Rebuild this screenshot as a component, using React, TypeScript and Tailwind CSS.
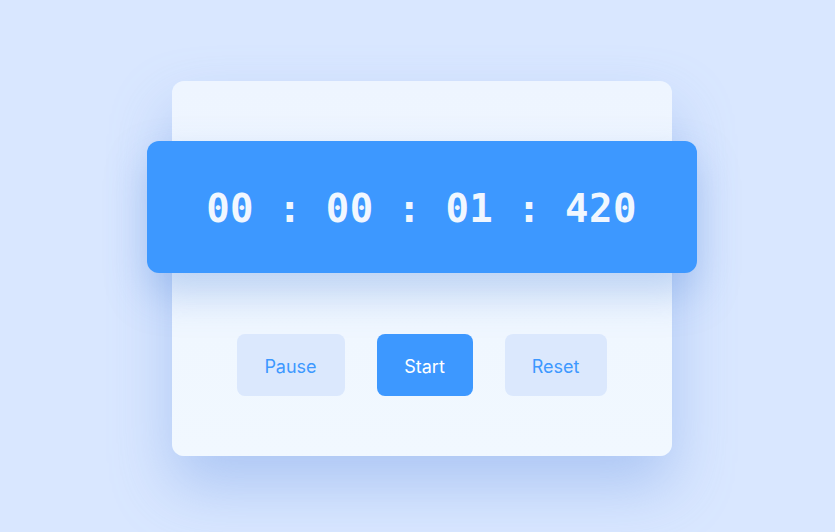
export default function App() {
  return (
    <main className="min-h-[532px] w-full bg-[#d9e7ff] flex items-center justify-center pl-2 pt-[5px] font-['Inter',sans-serif]">
      <div className="w-[500px] rounded-xl bg-gradient-to-b from-[#eef5ff] to-[#f1f8ff] py-[60px] shadow-[0_30px_60px_rgba(120,160,230,0.45)]">
        {/* DISPLAY */}
        <div className="-mx-[25px] h-[132px] rounded-xl bg-[#3d98ff] flex items-center justify-center pt-1 shadow-[0_20px_40px_rgba(90,140,220,0.35)]">
          <span className="text-[39px] font-bold text-[#f1f7ff] font-['DejaVu_Sans_Mono',monospace] tracking-[0.45px]">
            00 : 00 : 01 : 420
          </span>
        </div>

        {/* CONTROLES */}
        <div className="mt-[61px] flex justify-center gap-8">
          <button className="h-[62px] w-[108px] rounded-lg bg-[#dbe8fd] pt-[2px] text-[18px] text-[#3d98ff]">
            Pause
          </button>
          <button className="h-[62px] w-[96px] rounded-lg bg-[#3d98ff] pt-[2px] text-[18px] text-white">
            Start
          </button>
          <button className="h-[62px] w-[102px] rounded-lg bg-[#dbe8fd] pt-[2px] text-[18px] text-[#3d98ff]">
            Reset
          </button>
        </div>
      </div>
    </main>
  );
}
